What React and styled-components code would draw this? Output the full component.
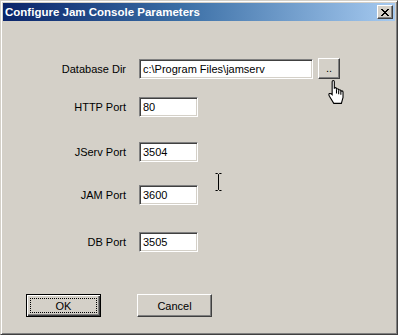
import React from "react";
import styled, { createGlobalStyle } from "styled-components";

const GlobalStyle = createGlobalStyle`
  html, body {
    margin: 0;
    padding: 0;
    background: #d4d0c8;
  }
`;

const Window = styled.div`
  position: relative;
  width: 398px;
  height: 335px;
  box-sizing: border-box;
  background: #d4d0c8;
  border: 1px solid;
  border-color: #d4d0c8 #404040 #404040 #d4d0c8;
  box-shadow: inset 1px 1px #ffffff, inset -1px -1px #808080;
  padding: 2px;
  font-family: "Liberation Sans", Arial, sans-serif;
  font-size: 11px;
  color: #000;
`;

const TitleBar = styled.div`
  height: 18px;
  display: flex;
  align-items: center;
  justify-content: space-between;
  background: linear-gradient(to right, #0a246a 0%, #3a6ea5 45%, #a6caf0 100%);
  padding: 0 2px 0 2px;
`;

const Title = styled.span`
  color: #fff;
  font-weight: bold;
  font-size: 11.5px;
  white-space: nowrap;
`;

const CloseButton = styled.div`
  width: 16px;
  height: 14px;
  box-sizing: border-box;
  background: #d4d0c8;
  border: 1px solid;
  border-color: #ffffff #404040 #404040 #ffffff;
  box-shadow: inset -1px -1px #808080;
  display: flex;
  align-items: center;
  justify-content: center;
`;

const Body = styled.div`
  display: flex;
  flex-direction: column;
`;

const Row = styled.div`
  display: grid;
  grid-template-columns: 123px auto;
  justify-content: start;
  align-items: center;
  column-gap: 13px;
  margin-top: ${({ $top }) => $top}px;
`;

const Label = styled.label`
  text-align: right;
  white-space: nowrap;
`;

const FieldGroup = styled.div`
  display: flex;
  align-items: center;
  gap: 5px;
`;

const Field = styled.div`
  width: ${({ $w }) => $w}px;
  height: 20px;
  box-sizing: border-box;
  background: #fff;
  border: 1px solid;
  border-color: #808080 #ffffff #ffffff #808080;
  box-shadow: inset 1px 1px #404040, inset -1px -1px #d4d0c8;
  padding: 0 3px;
  display: flex;
  align-items: center;
  white-space: nowrap;
`;

const SmallButton = styled.div`
  width: 22px;
  height: 21px;
  box-sizing: border-box;
  background: #d4d0c8;
  border: 1px solid;
  border-color: #ffffff #404040 #404040 #ffffff;
  box-shadow: inset -1px -1px #808080;
  display: flex;
  align-items: center;
  justify-content: center;
  padding-bottom: 2px;
`;

const ButtonBar = styled.div`
  display: flex;
  gap: 36px;
  margin-top: 42px;
  padding-left: 23px;
`;

const Button = styled.div`
  width: 75px;
  height: 23px;
  box-sizing: border-box;
  background: #d4d0c8;
  border: 1px solid;
  border-color: ${({ $default }) =>
    $default ? "#000" : "#ffffff #404040 #404040 #ffffff"};
  box-shadow: ${({ $default }) =>
    $default
      ? "inset 1px 1px #ffffff, inset -1px -1px #404040, inset -2px -2px #808080"
      : "inset -1px -1px #808080"};
  display: flex;
  align-items: center;
  justify-content: center;
  padding: 3px;
`;

const Focus = styled.div`
  flex: 1;
  align-self: stretch;
  border: 1px dotted #000;
  display: flex;
  align-items: center;
  justify-content: center;
`;

const Cursor = styled.svg`
  position: absolute;
  left: ${({ $x }) => $x}px;
  top: ${({ $y }) => $y}px;
  overflow: visible;
`;

const rows = [
  { label: "HTTP Port", value: "80", top: 18 },
  { label: "JServ Port", value: "3504", top: 25 },
  { label: "JAM Port", value: "3600", top: 23 },
  { label: "DB Port", value: "3505", top: 27 },
];

export default function App() {
  return (
    <>
      <GlobalStyle />
      <Window>
        <TitleBar>
          <Title>Configure Jam Console Parameters</Title>
          <CloseButton>
            <svg width="8" height="7" viewBox="0 0 8 7">
              <path d="M0,0 L7,7 M1,0 L8,7 M7,0 L0,7 M8,0 L1,7" stroke="#000" strokeWidth="1" />
            </svg>
          </CloseButton>
        </TitleBar>
        <Body>
          <Row $top={37}>
            <Label>Database Dir</Label>
            <FieldGroup>
              <Field $w={174}>c:\Program Files\jamserv</Field>
              <SmallButton>..</SmallButton>
            </FieldGroup>
          </Row>
          {rows.map((r) => (
            <Row key={r.label} $top={r.top}>
              <Label>{r.label}</Label>
              <Field $w={59}>{r.value}</Field>
            </Row>
          ))}
          <ButtonBar>
            <Button $default>
              <Focus>OK</Focus>
            </Button>
            <Button>Cancel</Button>
          </ButtonBar>
        </Body>

        <Cursor $x={326} $y={79} width="19" height="25" viewBox="0 0 17 23">
          <path
            d="M4.5,1.5 Q4.5,0.5 5.5,0.5 Q6.5,0.5 6.5,1.5 V8 Q6.5,7 7.5,7 Q8.5,7 8.5,8 V9 Q8.5,8 9.5,8 Q10.5,8 10.5,9 V10 Q10.5,9 11.5,9 Q12.5,9 12.5,10 V11 Q12.5,10 13.5,10 Q14.5,10 14.5,11 V16 L13,21.5 H6 L2,15 Q1,13 2,12.5 Q3,12 4.5,13.5 Z"
            fill="#fff"
            stroke="#000"
            strokeWidth="1"
          />
          <path d="M8.5,9 V12.5 M10.5,10 V13 M12.5,11 V13.5" stroke="#000" strokeWidth="1" fill="none" />
        </Cursor>

        <Cursor $x={214} $y={172} width="7" height="18" viewBox="0 0 7 18">
          <path
            d="M0.5,0.5 H2.5 L3.5,1.5 L4.5,0.5 H6.5 M3.5,1.5 V16.5 M0.5,17.5 H2.5 L3.5,16.5 L4.5,17.5 H6.5"
            stroke="#000"
            strokeWidth="1"
            fill="none"
          />
        </Cursor>
      </Window>
    </>
  );
}
